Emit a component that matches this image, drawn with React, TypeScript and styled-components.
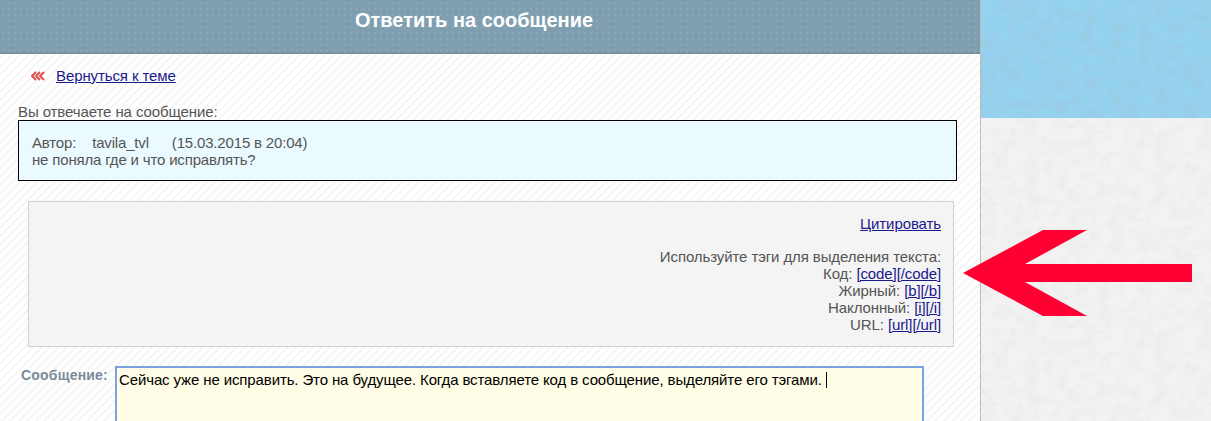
import React from "react";
import styled, { createGlobalStyle } from "styled-components";

const noise = (base: string, seed: number, tone: string, opacity: number) =>
  `url("data:image/svg+xml,${encodeURIComponent(
    `<svg xmlns='http://www.w3.org/2000/svg' width='231' height='200'><filter id='n' x='0' y='0' width='100%' height='100%'><feTurbulence type='fractalNoise' baseFrequency='0.07 0.09' numOctaves='4' seed='${seed}' stitchTiles='stitch'/><feColorMatrix type='matrix' values='0 0 0 0 ${tone} 0 0 0 0 ${tone} 0 0 0 0 ${tone} 0 0 0 5 -2.2'/></filter><rect width='231' height='200' fill='${base}'/><rect width='231' height='200' filter='url(#n)' opacity='${opacity}'/></svg>`
  )}")`;

const Global = createGlobalStyle`
  html, body { margin: 0; padding: 0; height: 100%; overflow: hidden; }
  body {
    font-family: "Liberation Sans", Arial, sans-serif;
    font-size: 15px;
    letter-spacing: -0.1px;
    color: #555;
  }
`;

const Page = styled.div`
  display: flex;
  width: 1211px;
  height: 421px;
  overflow: hidden;
`;

const Main = styled.main`
  width: 980px;
  flex: none;
  border-right: 1px solid #bcbcbc;
  background-color: #fff;
  background-image: repeating-linear-gradient(135deg, #fff 0 4px, #f6f6f6 4px 6px);
`;

const Aside = styled.aside`
  flex: 1;
  display: flex;
  flex-direction: column;
`;

const SkyBlock = styled.div`
  height: 118px;
  background-image: ${noise("#94d2f0", 4, "0.45", 0.14)};
`;

const GreyBlock = styled.div`
  flex: 1;
  background-image: ${noise("#f2f2f2", 9, "0.6", 0.12)};
`;

const Header = styled.header`
  height: 52px;
  padding-right: 32px;
  border-bottom: 2px solid #76919f;
  background-color: #7f9eaf;
  background-image: radial-gradient(#8aa8b7 0.7px, transparent 0.9px);
  background-size: 6px 6px;
  color: #fff;
  font-size: 20px;
  font-weight: 700;
  letter-spacing: 0;
  text-align: center;
  line-height: 41px;
`;

const BackRow = styled.div`
  display: flex;
  align-items: center;
  gap: 11px;
  height: 17px;
  margin: 13px 0 0 31px;
`;

const Link = styled.a`
  color: #1a1a8c;
  text-decoration: underline;
  cursor: pointer;
`;

const Lead = styled.div`
  margin: 19px 0 0 18px;
  height: 17px;
  line-height: 17px;
`;

const Quote = styled.div`
  box-sizing: border-box;
  margin: 0 0 0 18px;
  width: 939px;
  height: 61px;
  padding: 13px 13px;
  border: 1px solid #000;
  background: #ebfaff;
  line-height: 17px;
  letter-spacing: -0.17px;
`;

const Meta = styled.span<{ $gap: number }>`
  margin-right: ${(p) => p.$gap}px;
`;

const Panel = styled.section`
  box-sizing: border-box;
  margin: 20px 0 0 28px;
  width: 926px;
  height: 146px;
  padding: 13px 12px 0;
  border: 1px solid #cfcfcf;
  background: #f4f4f4;
  text-align: right;
  line-height: 17px;
`;

const TagList = styled.div`
  margin-top: 16px;
`;

const MessageRow = styled.div`
  display: flex;
  margin: 19px 0 0 21px;
`;

const Label = styled.label`
  width: 94px;
  flex: none;
  padding-top: 1px;
  font-size: 14px;
  font-weight: 700;
  letter-spacing: 0.2px;
  line-height: 16px;
  color: #7a8a9a;
`;

const Editor = styled.div`
  box-sizing: border-box;
  width: 809px;
  height: 80px;
  padding: 3px 2px;
  border: 2px solid #7ba3e0;
  border-bottom: 0;
  background: #fffde6;
  color: #000;
  line-height: 17px;
  letter-spacing: -0.12px;
`;

const Caret = styled.span`
  display: inline-block;
  width: 1px;
  height: 16px;
  margin-left: 4px;
  background: #000;
  vertical-align: -3px;
`;

const ArrowSvg = styled.svg`
  position: absolute;
  left: 963px;
  top: 230px;
`;

const Chevrons = () => (
  <svg width="14" height="10" viewBox="0 0 14 10" style={{ flex: "none" }}>
    {[0, 4, 8].map((x) => (
      <path key={x} d={`M${x + 5} 1 L${x + 1} 5 L${x + 5} 9`} fill="none" stroke="#dd5048" strokeWidth="2" />
    ))}
  </svg>
);

const Tags = ({ label, open, close }: { label: string; open: string; close: string }) => (
  <div>
    {label}: <Link>{open}</Link>
    <Link>{close}</Link>
  </div>
);

export default function App() {
  return (
    <Page>
      <Global />
      <Main>
        <Header>Ответить на сообщение</Header>
        <BackRow>
          <Chevrons />
          <Link>Вернуться к теме</Link>
        </BackRow>
        <Lead>Вы отвечаете на сообщение:</Lead>
        <Quote>
          <Meta $gap={16}>Автор:</Meta>
          <Meta $gap={23}>tavila_tvl</Meta>
          <span>(15.03.2015 в 20:04)</span>
          <br />
          не поняла где и что исправлять?
        </Quote>
        <Panel>
          <Link>Цитировать</Link>
          <TagList>
            <div>Используйте тэги для выделения текста:</div>
            <Tags label="Код" open="[code]" close="[/code]" />
            <Tags label="Жирный" open="[b]" close="[/b]" />
            <Tags label="Наклонный" open="[i]" close="[/i]" />
            <Tags label="URL" open="[url]" close="[/url]" />
          </TagList>
        </Panel>
        <MessageRow>
          <Label>Сообщение:</Label>
          <Editor>
            Сейчас уже не исправить. Это на будущее. Когда вставляете код в сообщение, выделяйте его тэгами.
            <Caret />
          </Editor>
        </MessageRow>
      </Main>
      <Aside>
        <SkyBlock />
        <GreyBlock />
      </Aside>
      <ArrowSvg width="230" height="86" viewBox="0 0 230 86">
        <path d="M0 43 L80 0 L124 0 L62 34 L229 34 L229 52 L62 52 L124 86 L80 86 Z" fill="#ff0033" />
      </ArrowSvg>
    </Page>
  );
}
